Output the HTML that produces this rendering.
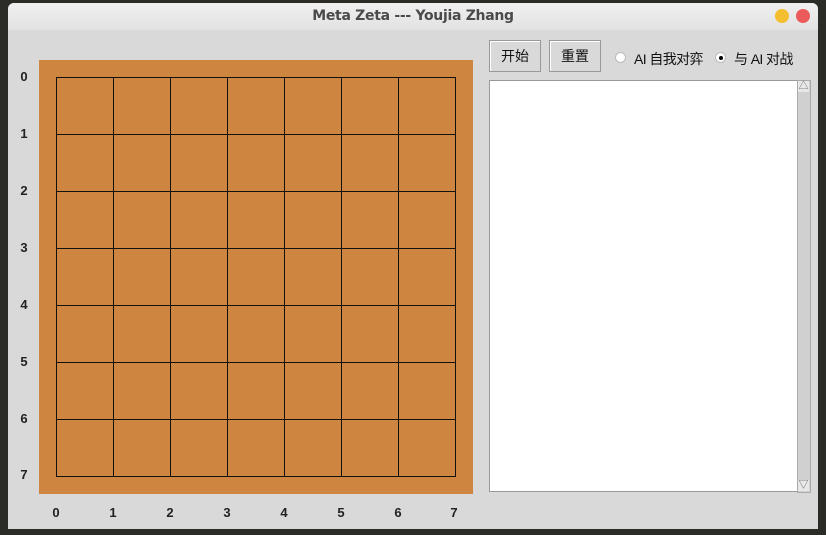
<!DOCTYPE html><html><head><meta charset="utf-8"><style>
body{margin:0;width:826px;height:535px;background:#2b2b28;position:relative;overflow:hidden;font-family:"Liberation Sans","Noto Sans CJK SC",sans-serif}
.win{position:absolute;left:8px;top:3px;width:810px;height:526px;background:#d9d9d9;border-radius:6px 6px 0 0;overflow:hidden}
.tb{position:absolute;left:0;top:0;width:810px;height:27px;background:linear-gradient(#f0f0f0,#e2e2e2);text-align:center;font:bold 14px "DejaVu Sans",sans-serif;color:#4a4a4a;line-height:27px;letter-spacing:-0.3px}
.dot{position:absolute;top:6px;width:14px;height:14px;border-radius:50%}
.a{position:absolute}
.lbl{position:absolute;font-size:13px;font-weight:bold;color:#222;width:20px;text-align:center}
.btn{position:absolute;top:40px;width:50px;height:30px;border:1px solid #999;box-shadow:inset 1px 1px #fff;background:#d9d9d9;font-size:14px;line-height:30px;text-align:center;color:#111}
.rad{position:absolute;top:52px;width:9px;height:9px;border-radius:50%;background:#fff;border:1px solid #bbb}
.rt{position:absolute;top:49px;font-size:14px;color:#111;letter-spacing:-0.6px}
</style></head><body>
<div class="win"><div class="tb">Meta Zeta --- Youjia Zhang</div>
<div class="dot" style="left:767px;background:#f4bf2f"></div><div class="dot" style="left:788px;background:#ec5b5b"></div></div>
<div class="a" style="left:39px;top:60px;width:434px;height:434px;background:#cd853f"></div>
<svg class="a" style="left:0;top:0" width="826" height="535">
<g stroke="#111" stroke-width="1">
<path d="M56.5 77V476M113.5 77V476M170.5 77V476M227.5 77V476M284.5 77V476M341.5 77V476M398.5 77V476M455.5 77V476M56 77.5H456M56 134.5H456M56 191.5H456M56 248.5H456M56 305.5H456M56 362.5H456M56 419.5H456M56 476.5H456"/>
</g></svg>
<div class="lbl" style="left:14px;top:69px">0</div><div class="lbl" style="left:14px;top:126px">1</div><div class="lbl" style="left:14px;top:183px">2</div><div class="lbl" style="left:14px;top:240px">3</div><div class="lbl" style="left:14px;top:297px">4</div><div class="lbl" style="left:14px;top:354px">5</div><div class="lbl" style="left:14px;top:411px">6</div><div class="lbl" style="left:14px;top:467px">7</div>
<div class="lbl" style="left:46px;top:505px">0</div><div class="lbl" style="left:103px;top:505px">1</div><div class="lbl" style="left:160px;top:505px">2</div><div class="lbl" style="left:217px;top:505px">3</div><div class="lbl" style="left:274px;top:505px">4</div><div class="lbl" style="left:331px;top:505px">5</div><div class="lbl" style="left:388px;top:505px">6</div><div class="lbl" style="left:444px;top:505px">7</div>
<div class="btn" style="left:489px">开始</div><div class="btn" style="left:549px">重置</div>
<div class="rad" style="left:615px"></div><div class="rt" style="left:634px">AI 自我对弈</div>
<div class="rad" style="left:715px"><div style="position:absolute;left:2.5px;top:2.5px;width:4px;height:4px;border-radius:50%;background:#000"></div></div><div class="rt" style="left:734px">与 AI 对战</div>
<div class="a" style="left:489px;top:80px;width:307px;height:410px;background:#fff;border:1px solid #999;border-right:none"></div>
<div class="a" style="left:797px;top:80px;width:12px;height:411px;background:#d0d0d0;border:1px solid #aaa"></div>
<div class="a" style="left:798px;top:81px;width:11px;height:11px;background:#e8e8e8;font-size:10px;line-height:11px;text-align:center;color:#666">△</div>
<div class="a" style="left:798px;top:480px;width:11px;height:11px;background:#e8e8e8;font-size:10px;line-height:11px;text-align:center;color:#666">▽</div>
</body></html>
